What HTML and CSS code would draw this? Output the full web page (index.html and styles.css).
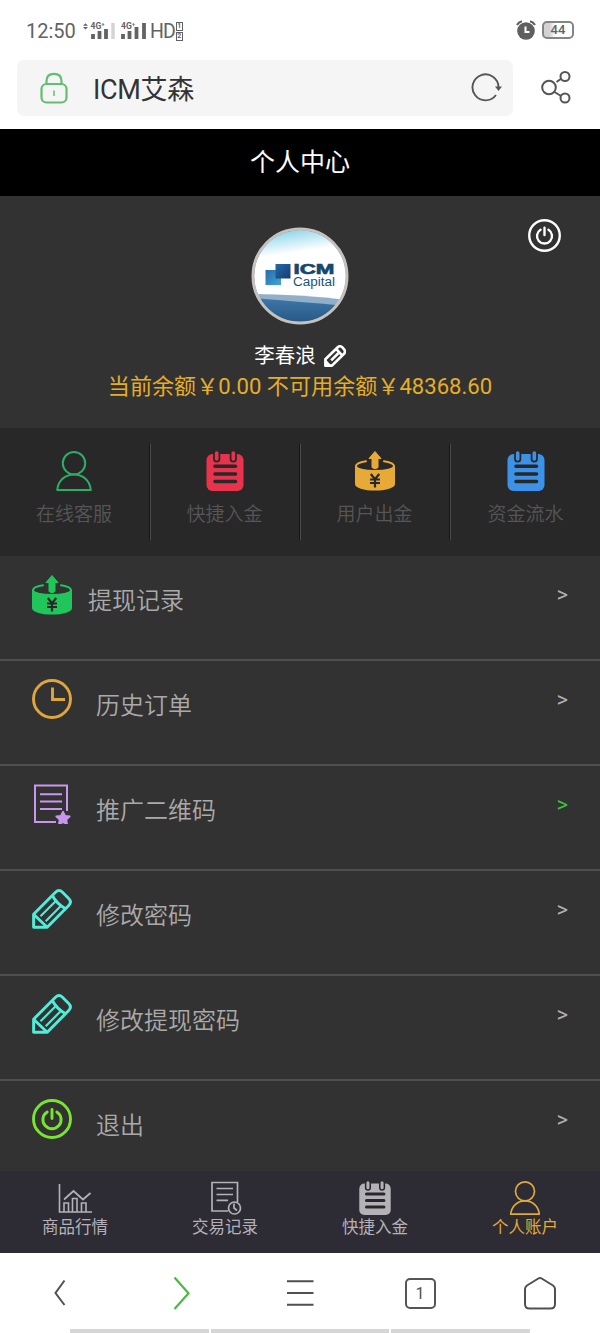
FILE: index.html
```html
<!DOCTYPE html>
<html lang="zh-CN">
<head>
<meta charset="utf-8">
<title>个人中心</title>
<link rel="stylesheet" href="styles.css">
</head>
<body>
<svg class="defs" width="0" height="0">
  <symbol id="user" viewBox="0 0 40 40"><g fill="none" stroke="currentColor" stroke-width="2"><circle cx="20" cy="12.2" r="11.2"/><path d="M3.2 39C4 29.8 11 23.4 20 23.4S36 29.8 36.8 39Z" stroke-linejoin="round"/></g></symbol>
  <symbol id="pad" viewBox="0 0 40 40"><rect x="1.5" y="3" width="37" height="37" rx="6" fill="currentColor"/><g class="cut" stroke-linecap="round"><path d="M11.7 3v5M28.3 3v5" stroke-width="7.2"/><path d="M10 15.2h20.500M10 23h20.500M10 30.500h20.500" stroke-width="3.600"/></g><path d="M11.700 2v6M28.300 2v6" stroke="currentColor" stroke-width="3.600" stroke-linecap="round"/></symbol>
  <symbol id="coin" viewBox="0 0 40 40"><path d="M0 14.500C3 19 12 20.500 20 20.500S37 19 40 14.500V33C40 37 31 39.600 20 39.600S0 37 0 33Z" fill="currentColor"/><path d="M11 10.300C4 11.500 1 13 1 15C1 18 9 20 20 20S39 18 39 15C39 13 36 11.500 29 10.300" fill="none" stroke="currentColor" stroke-width="2" stroke-linecap="round"/><path d="M20 .5L26 7.500H23V16.500Q20 19 17 16.500V7.500H14Z" fill="currentColor" stroke="currentColor" stroke-linejoin="round"/><path class="cut" d="M15.800 23L20 28.200L24.200 23M20 28.200V36.500M15 28.500H25M15 32H25" fill="none" stroke-width="2.200"/></symbol>
  <symbol id="pencil" viewBox="0 0 40 40"><g fill="none" stroke="currentColor" stroke-width="2.900" stroke-linejoin="round"><path d="M1.600 25.200L23.500 3.300Q27 -.200 30.500 3.300L36.700 9.500Q40.200 13 36.700 16.500L15.200 38.200H1.600Z"/><path d="M20.300 6.500Q24.500 14.500 33.500 19.700M1.600 25.200L15.200 38.200"/><path d="M8.500 27.300L23.800 12M13.700 32.200L28.800 17.100" stroke-width="2.100"/></g></symbol>
  <symbol id="power" viewBox="0 0 40 40"><g fill="none" stroke="currentColor" stroke-width="2.900"><circle cx="20" cy="20" r="18.500"/><path d="M15.200 12.900A9.100 9.100 0 1 0 24.800 12.900M20 10.500V19.500" stroke-linecap="round"/></g></symbol>
</svg>

<header class="status">
  <span class="time">12:50</span>
  <svg class="signals" width="64" height="20" viewBox="82 20 64 20"><path d="M83 24.800l2.500-2.500 2.500 2.500zM83 26l2.500 2.500 2.500-2.500z"/><g class="sig-text"><text x="90.500" y="28">4G⁺</text><text x="121" y="28">4G⁺</text></g><path d="M93 33v5M99.500 30v8M106 28v10M123 33v5M129.500 30v8M136.500 26v12M144 22v16" stroke="#636363" stroke-width="3.800"/><path d="M113 22v16" stroke="#d4d4d4" stroke-width="3.500"/></svg>
  <span class="hd">HD</span>
  <span class="sims"><i>1</i><i>2</i></span>
  <svg class="alarm" width="20" height="20" viewBox="0 0 20 20"><circle cx="10" cy="11" r="8.800" fill="#5f5f5f"/><path d="M1 5Q2.500 2 6 1.200M14 1.200Q17.500 2 19 5" fill="none" stroke="#5f5f5f" stroke-width="2"/><path d="M9.500 6.500V12H13.500" fill="none" stroke="#fff" stroke-width="2"/></svg>
  <span class="battery">44</span>
</header>

<div class="browser">
  <div class="address">
    <svg class="lock" width="30" height="32" viewBox="0 0 30 32"><g fill="none" stroke="#64bd72" stroke-width="2.200"><rect x="2.500" y="12" width="25" height="18.500" rx="5"/><path d="M7.500 12V9Q7.500 1.800 15 1.800T22.500 9V12"/><path d="M15 18.500v5.500" stroke-width="1.500"/></g></svg>
    <span class="site">ICM艾森</span>
    <svg width="32" height="32" viewBox="0 0 32 32"><path d="M26 23A13 13 0 1 1 28.500 15" fill="none" stroke="#555" stroke-width="1.900"/><path d="M25 14.500H32L28.500 19Z" fill="#555"/></svg>
  </div>
  <svg class="share" width="32" height="34" viewBox="540 70 32 34"><g fill="none" stroke="#555" stroke-width="2"><circle cx="549" cy="86.500" r="6.800"/><circle cx="565" cy="75.500" r="4.500"/><circle cx="565" cy="97" r="4.500"/><path d="M556.500 81l5-3.500M554.500 91l6.500 4"/></g></svg>
</div>

<h1 class="title">个人中心</h1>

<section class="profile">
  <svg class="logout" width="33" height="33"><use href="#power"/></svg>
  <svg class="avatar" width="98" height="98" viewBox="0 0 98 98">
    <defs>
      <clipPath id="disc"><circle cx="49" cy="49" r="46"/></clipPath>
      <linearGradient id="sky" x2=".15" y2="1"><stop offset="0" stop-color="#58bfdc"/><stop offset=".12" stop-color="#9edced"/><stop offset=".32" stop-color="#fff"/></linearGradient>
      <linearGradient id="sea" x2="0" y2="1"><stop stop-color="#3f77a7"/><stop offset="1" stop-color="#245584"/></linearGradient>
      <linearGradient id="tile" x2="1" y2="1"><stop stop-color="#246ba6"/><stop offset="1" stop-color="#173a76"/></linearGradient>
      <linearGradient id="tile2" x2="1" y2="1"><stop stop-color="#286ca8"/><stop offset="1" stop-color="#41a5d5"/></linearGradient>
    </defs>
    <g clip-path="url(#disc)"><path d="M0 0H98V98H0Z" fill="url(#sky)"/><path d="M0 67Q45 67 98 73V98H0Z" fill="#91afc8"/><path d="M0 71Q30 73 98 79V98H0Z" fill="url(#sea)"/></g>
    <circle cx="49" cy="49" r="47" fill="none" stroke="#c5c1bf" stroke-width="3"/>
    <path d="M14.500 43H30V58H14.500Z" fill="url(#tile2)"/><path d="M24.500 37H39.500V51.500H24.500Z" fill="url(#tile)"/>
    <text x="42.500" y="47" class="logo-top" textLength="41" lengthAdjust="spacingAndGlyphs">ICM</text>
    <text x="42" y="58.500" class="logo-sub" textLength="42" lengthAdjust="spacingAndGlyphs">Capital</text>
  </svg>
  <div class="name">李春浪<svg width="22" height="22" viewBox="0 0 40 40"><g fill="none" stroke="currentColor" stroke-width="4.800" stroke-linejoin="round"><path d="M2.500 26L25 4Q29 .500 33 4L36.500 8Q40 12 36.500 16L14.500 37.500H2.500Z"/><path d="M22 7L33 19M13 28L26 15" /></g><path d="M2 25L14 38H2Z" fill="currentColor"/></svg></div>
  <div class="balance">当前余额￥0.00 不可用余额￥48368.60</div>
</section>

<nav class="quick">
  <a class="green"><svg><use href="#user"/></svg><span>在线客服</span></a>
  <a class="red"><svg><use href="#pad"/></svg><span>快捷入金</span></a>
  <a class="amber"><svg><use href="#coin"/></svg><span>用户出金</span></a>
  <a class="blue"><svg><use href="#pad"/></svg><span>资金流水</span></a>
</nav>

<main class="menu">
  <a class="row first"><svg class="c-green"><use href="#coin"/></svg><span>提现记录</span><b>&gt;</b></a>
  <a class="row"><svg class="c-amber" viewBox="0 0 40 40"><g fill="none" stroke="currentColor" stroke-width="2.900"><circle cx="20" cy="20" r="18.500"/><path d="M20.500 8.500V20.500H33"/></g></svg><span>历史订单</span><b>&gt;</b></a>
  <a class="row"><svg class="c-purple" viewBox="0 0 40 40"><path d="M24 38H3V1.500H35V27M8 10.300H30M8 17.500H30M8 25H30" fill="none" stroke="currentColor" stroke-width="2"/><path d="M31 27.500l2.100 4.200 4.700.7-3.400 3.300.8 4.700-4.200-2.200-4.200 2.200.8-4.700-3.400-3.300 4.700-.7z" fill="currentColor" stroke="currentColor" stroke-width="1.600" stroke-linejoin="round"/></svg><span>推广二维码</span><b class="active">&gt;</b></a>
  <a class="row"><svg class="c-cyan"><use href="#pencil"/></svg><span>修改密码</span><b>&gt;</b></a>
  <a class="row"><svg class="c-cyan"><use href="#pencil"/></svg><span>修改提现密码</span><b>&gt;</b></a>
  <a class="row"><svg class="c-lime"><use href="#power"/></svg><span>退出</span><b>&gt;</b></a>
</main>

<nav class="tabs">
  <a><svg viewBox="0 0 34 34"><g fill="none" stroke="currentColor" stroke-width="1.600"><path d="M1.500 3V31H34M6 31V22H10.500V31M14.500 31V17.500H19V31M23.500 31V22H28V31"/><path d="M6 18.500L15.500 10L25 18.500L32.500 12" stroke-width="1.700"/></g></svg><span>商品行情</span></a>
  <a><svg viewBox="0 0 34 34"><g fill="none" stroke="currentColor" stroke-width="1.700"><path d="M20 30H4V1.500H29.500V21M8.500 7.500H25M8.500 13.500H25M8.500 19.300H20"/><circle cx="26.500" cy="27" r="6"/><path d="M26 22.500V27L29 29.500"/></g></svg><span>交易记录</span></a>
  <a><svg><use href="#pad"/></svg><span>快捷入金</span></a>
  <a class="on"><svg><use href="#user"/></svg><span>个人账户</span></a>
</nav>

<footer class="toolbar">
  <svg viewBox="0 0 40 40"><path d="M24.500 7.500L15.500 20L24.500 32" fill="none" stroke="#505050" stroke-width="2"/></svg>
  <svg viewBox="0 0 40 40"><path d="M14.500 4.500L28.500 20.300L14.500 36" fill="none" stroke="#4bb844" stroke-width="2.200"/></svg>
  <svg viewBox="0 0 40 40"><path d="M7 8.300H33.500M7 20H33.500M7 31.700H33.500" stroke="#505050" stroke-width="2"/></svg>
  <div class="count"><span>1</span></div>
  <svg viewBox="0 0 40 40"><path d="M5 16Q5 14 7 12.500L18.300 5.500Q20 4.300 21.700 5.500L33 12.500Q35 14 35 16V31Q35 35.500 30.500 35.500H9.500Q5 35.500 5 31Z" fill="none" stroke="#505050" stroke-width="2"/></svg>
</footer>
<div class="gesture"><i></i><i></i><i></i></div>
</body>
</html>
```
FILE: styles.css
```css
* { box-sizing: border-box; }
body { margin: 0; width: 600px; height: 1333px; overflow: hidden; display: flex; flex-direction: column; background: #fff; font-family: Roboto, "Noto Sans CJK SC", sans-serif; }
body > * { flex: none; }
.defs { position: absolute; }

.status { height: 60px; padding: 2px 25px 0 26px; display: flex; align-items: center; color: #636363; }
.time { width: 56px; font-size: 20px; }
.signals { fill: #636363; }
.sig-text { font: bold 8.500px Roboto, sans-serif; }
.hd { margin-left: 4px; font-size: 19.500px; letter-spacing: -1px; }
.sims { display: flex; flex-direction: column; gap: 1px; margin-left: 1px; }
.sims i { width: 7px; height: 9px; border: 1px solid #636363; font: bold 7px/7px Roboto, sans-serif; text-align: center; }
.alarm { margin: -2px 6px 0 auto; }
.battery { width: 32px; height: 18px; margin: -2px 1px 0 0; border: 2px solid #858585; border-radius: 5px; background: linear-gradient(90deg, #d3d3d3 20%, #fff 40%); font: 500 13px/14px Roboto, sans-serif; text-align: center; }

.browser { height: 69px; padding: 0 28px 13px 17px; display: flex; justify-content: space-between; align-items: center; }
.address { width: 496px; height: 56px; padding: 0 11px 0 22px; display: flex; align-items: center; border-radius: 7px; background: #f5f5f5; }
.site { flex: 1; margin: 3px 0 0 24px; font-size: 27px; line-height: 36px; color: #333; letter-spacing: -.3px; }

.title { margin: 0; height: 67px; padding-top: 1px; background: #000; color: #fff; text-align: center; font-size: 25px; font-weight: 400; line-height: 66px; }

.profile { position: relative; height: 232px; padding-top: 31px; display: flex; flex-direction: column; align-items: center; background: #323232; color: #fff; }
.logout { position: absolute; top: 23px; right: 39px; }
.logo-top { font: 900 15.500px "Liberation Sans", sans-serif; fill: #15486f; stroke: #15486f; stroke-width: .7px; }
.logo-sub { font: 12.500px "Liberation Sans", sans-serif; fill: #1b5277; }
.name { display: flex; align-items: center; gap: 8px; height: 28px; margin-top: 17px; font-size: 20.500px; line-height: 28px; }
.balance { height: 32px; margin-top: 0; color: #e6ad28; font-size: 22.100px; line-height: 32px; white-space: nowrap; }

.quick { height: 128px; padding: 16px 0; display: grid; grid-template-columns: 151px 150px 150px 149px; background: #282828; }
.quick a { display: flex; flex-direction: column; align-items: center; padding: 7px 2px 0 0; border-right: 1px solid #4b4b4b; box-shadow: inset -1px 0 #151515; }
.quick a:last-child { border: 0; box-shadow: none; padding-right: 0; }
.quick svg, .row svg { width: 40px; height: 40px; }
.quick span { margin-top: 9px; color: #565656; font-size: 19px; font-weight: 350; line-height: 30px; }
.cut { stroke: #282828; }
.green { color: #2dae64; }
.red { color: #e7344c; }
.amber { color: #e8aa37; }
.blue { color: #3b92e7; }

.menu { height: 615px; background: #323232; overflow: hidden; }
.row { height: 105px; padding: 18px 32px 0; display: flex; align-items: flex-start; border-bottom: 2px solid #4f4f4f; }
.row.first svg { margin-top: 1px; }
.row span { margin: 9px 0 0 24px; flex: 1; color: #aaa; font-size: 24px; font-family: Roboto, "Noto Sans CJK SC DemiLight", "Noto Sans CJK SC", sans-serif; font-weight: 400; line-height: 36px; }
.row.first span { margin-left: 16px; }
.row b { margin-top: 9px; color: #b0b0b0; font-size: 22px; font-weight: 400; line-height: 24px; }
.row b.active { color: #3fc33c; }
.c-green { color: #20c65a; }
.c-amber { color: #dfa63b; }
.c-purple { color: #c996ed; }
.c-cyan { color: #51edda; }
.c-lime { color: #79e52c; }

.tabs { height: 82px; display: grid; grid-template-columns: repeat(4, 1fr); background: #2d2b33; color: #b4b2b8; }
.tabs a { display: flex; flex-direction: column; align-items: center; padding-top: 10px; }
.tabs svg { width: 34px; height: 34px; }
.tabs span { margin-top: 1px; font-size: 16.500px; font-weight: 400; line-height: 24px; }
.tabs .on { color: #e1aa3a; }

.toolbar { height: 76px; padding-top: 4px; display: grid; grid-template-columns: repeat(5, 1fr); place-items: center; }
.toolbar svg { width: 40px; height: 40px; }
.count { width: 31px; height: 31px; border: 2px solid #555; border-radius: 5px; color: #505050; text-align: center; font-size: 16px; line-height: 27px; }
.gesture { height: 4px; padding: 0 70px; display: grid; grid-template-columns: 139px 178px 139px; gap: 2px; }
.gesture i { background: #d6d6d6; }
```
